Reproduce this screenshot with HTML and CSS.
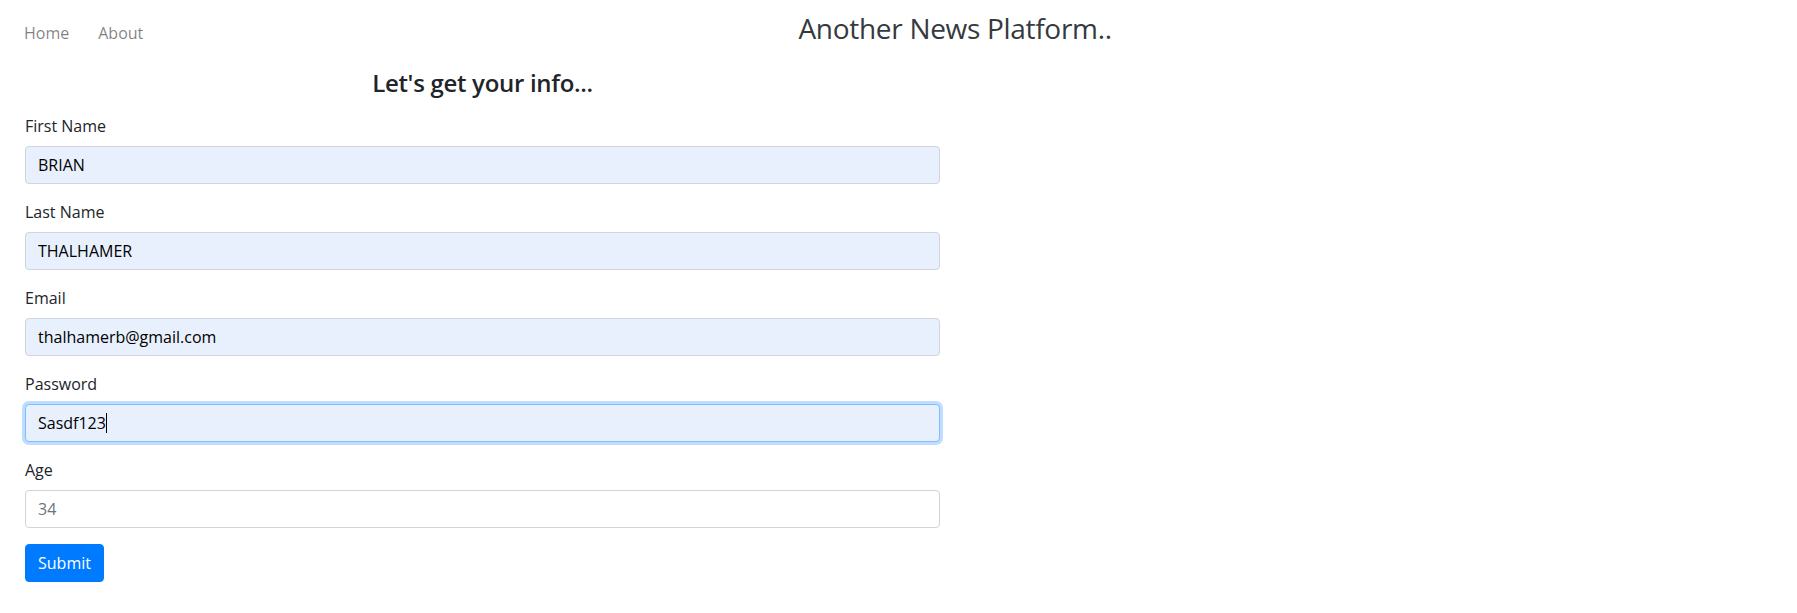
FILE: index.html
```html
<!DOCTYPE html>
<html lang="en">
<head>
<meta charset="utf-8">
<title>Another News Platform..</title>
<link rel="stylesheet" href="styles.css">
</head>
<body>
<nav class="navbar">
  <ul class="nav-links">
    <li><a class="nav-link" href="#">Home</a></li>
    <li><a class="nav-link" href="#">About</a></li>
  </ul>
  <h3 class="brand">Another News Platform..</h3>
</nav>
<main class="main">
  <form class="info-form">
    <h4 class="form-title">Let's get your info...</h4>
    <div class="form-group">
      <label class="form-label" for="first">First Name</label>
      <input class="form-control autofilled" id="first" type="text" value="BRIAN">
    </div>
    <div class="form-group">
      <label class="form-label" for="last">Last Name</label>
      <input class="form-control autofilled" id="last" type="text" value="THALHAMER">
    </div>
    <div class="form-group">
      <label class="form-label" for="email">Email</label>
      <input class="form-control autofilled" id="email" type="text" value="thalhamerb@gmail.com">
    </div>
    <div class="form-group">
      <label class="form-label" for="password">Password</label>
      <div class="form-control autofilled focused" id="password">Sasdf123<span class="caret"></span></div>
    </div>
    <div class="form-group">
      <label class="form-label" for="age">Age</label>
      <input class="form-control" id="age" type="text" placeholder="34">
    </div>
    <button class="btn-submit" type="button">Submit</button>
  </form>
</main>
</body>
</html>
```
FILE: styles.css
```css
* { box-sizing: border-box; }
html, body { margin: 0; padding: 0; }
body {
  font-family: "Open Sans", "Noto Sans", sans-serif;
  font-size: 16px;
  line-height: 1.5;
  color: #212529;
  background: #fff;
}
.navbar {
  display: flex;
  align-items: flex-start;
  padding: 12px 16px 16px;
}
.nav-links {
  display: flex;
  gap: 13px;
  list-style: none;
  margin: 0;
  padding: 0;
}
.nav-link {
  display: block;
  padding: 9px 8px 8px;
  color: rgba(0,0,0,.5);
  text-decoration: none;
}
.brand {
  margin: 0 auto;
  padding-right: 22px;
  font-size: 28px;
  font-weight: 500;
  letter-spacing: -0.3px;
  line-height: 1.2;
  color: #343a40;
}
.main {
  width: 915px;
  margin-left: 25px;
}
.form-title {
  margin: 0 0 16px;
  text-align: center;
  font-size: 24px;
  font-weight: 600;
  letter-spacing: -0.3px;
  line-height: 1.2;
}
.form-group { margin-bottom: 16px; }
.form-label {
  display: inline-block;
  margin-bottom: 8px;
}
.form-control {
  display: block;
  width: 100%;
  height: 38px;
  padding: 6px 12px;
  font-family: inherit;
  font-size: 16px;
  line-height: 1.5;
  color: #495057;
  background: #fff;
  border: 1px solid #ced4da;
  border-radius: 4px;
  outline: none;
}
.form-control::placeholder { color: #6c757d; }
.autofilled {
  background: #e8f0fe;
  color: #000;
}
.focused {
  border-color: #80bdff;
  box-shadow: 0 0 0 3px rgba(0,123,255,.25);
}
.caret {
  display: inline-block;
  width: 1px;
  height: 20px;
  background: #000;
  vertical-align: -4px;
}
.btn-submit {
  display: inline-block;
  padding: 6px 12px;
  font-family: inherit;
  font-size: 16px;
  line-height: 1.5;
  color: #fff;
  background: #007bff;
  border: 1px solid #007bff;
  border-radius: 4px;
}
```
